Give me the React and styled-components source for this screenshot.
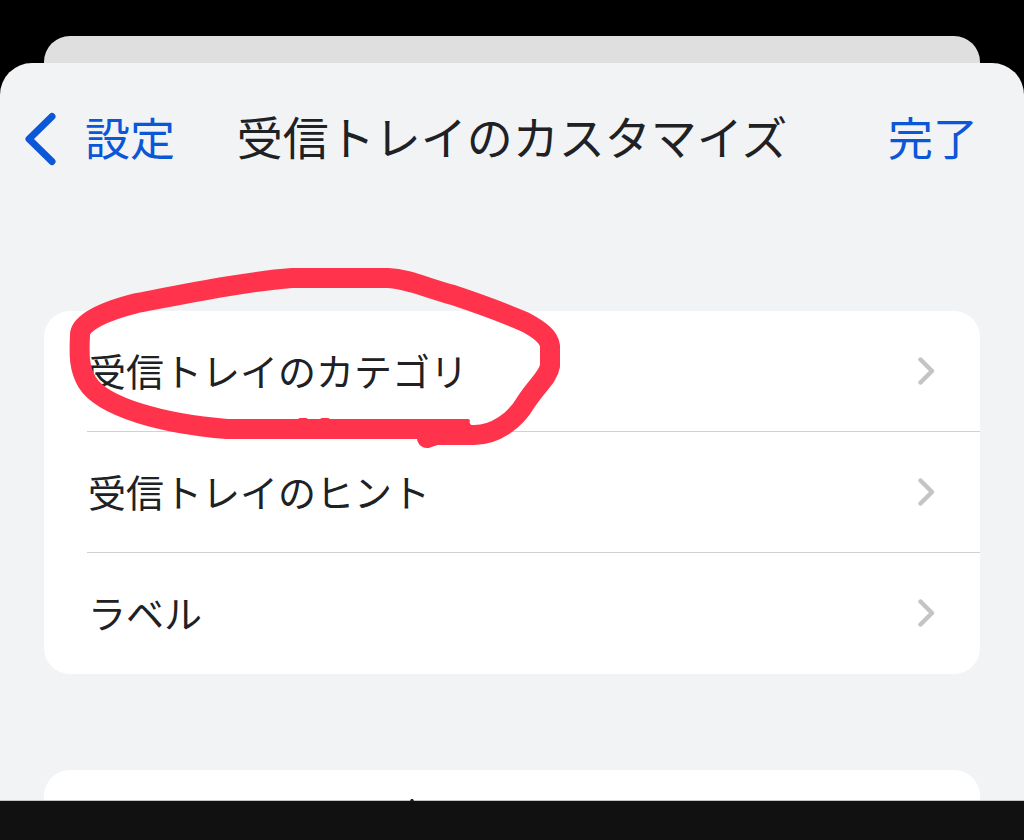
import styled, { createGlobalStyle } from "styled-components";

const rows = [
  { label: "受信トレイのカテゴリ", href: "#categories", marked: true },
  { label: "受信トレイのヒント", href: "#tips" },
  { label: "ラベル", href: "#labels" },
];

export default function App() {
  return (
    <Screen>
      <GlobalStyle />
      <BackCard />
      <Sheet>
        <Header>
          <BackButton type="button">
            <BackIcon viewBox="0 0 32 54" aria-hidden="true">
              <path d="M28 4.5 L5 27 L28 49.5" />
            </BackIcon>
            <HeaderLabel>設定</HeaderLabel>
          </BackButton>
          <Title>受信トレイのカスタマイズ</Title>
          <DoneButton type="button">
            <HeaderLabel>完了</HeaderLabel>
          </DoneButton>
        </Header>
        <Content>
          <Group>
            {rows.map((row) => (
              <Row key={row.label}>
                <RowLink href={row.href}>
                  <RowLabel>{row.label}</RowLabel>
                  <Chevron viewBox="0 0 18 30" aria-hidden="true">
                    <path d="M3.5 3.5 L15 15 L3.5 26.5" />
                  </Chevron>
                </RowLink>
                {row.marked && <Marker />}
              </Row>
            ))}
          </Group>
          <NextGroup>
            {/* tip of the text that is cut off by the bottom bar */}
            <Speck viewBox="0 0 4 2" aria-hidden="true">
              <path d="M0 2 L1 0 H3 L4 2 Z" />
            </Speck>
          </NextGroup>
        </Content>
      </Sheet>
      <BottomBar />
    </Screen>
  );
}

// hand drawn ring around the first row
function Marker() {
  return (
    <Ring viewBox="68 264 496 190" aria-hidden="true">
      <path d="M338 278 H292 C250 281 190 293 137 303 C105 311 80 322 80 335 C79 355 79 368 87 382 C103 408 165 424 227 429 H462" />
      <path d="M338 278 H388 C408 279 424 287 453 295 C480 304 502 312 525 322 C540 330 549 337 550 346 V366 C548 377 538 384 526 402 C515 421 495 435 474 435 H436 L427 438" />
      <path className="rough" d="M300 420 H306 M322 420 H328 M392 421 H400 M422 421 H468" />
      <path className="rough" d="M336 270 H340 M382 270 H384" />
    </Ring>
  );
}

const GlobalStyle = createGlobalStyle`
  * {
    box-sizing: border-box;
  }

  body {
    margin: 0;
    background: #000000;
    color: #202124;
    font-family: "Noto Sans CJK JP", sans-serif;
  }
`;

const Screen = styled.div`
  display: flex;
  flex-direction: column;
  min-height: 100vh;
  padding-top: 36px;
  background: #000000;
`;

const BackCard = styled.div`
  height: 27px;
  margin: 0 44px;
  border-radius: 26px 26px 0 0;
  background: #dfdfdf;
`;

const Sheet = styled.main`
  display: flex;
  flex-direction: column;
  flex: 1;
  border-radius: 32px 32px 0 0;
  background: #f1f3f5;
`;

const Header = styled.header`
  display: grid;
  grid-template-columns: 1fr auto 1fr;
  align-items: center;
  height: 152px;
  padding: 0 24px;
`;

const Title = styled.h1`
  margin: 0;
  padding-bottom: 8px;
  font-size: 46px;
  font-weight: 400;
  line-height: 64px;
`;

const HeaderButton = styled.button`
  display: flex;
  align-items: center;
  padding: 0;
  border: none;
  background: none;
  color: #0b57d8;
  font-family: inherit;
  font-size: 45px;
  line-height: 64px;
  white-space: nowrap;
  cursor: pointer;
`;

const HeaderLabel = styled.span`
  padding-bottom: 4px;
`;

const BackButton = styled(HeaderButton)`
  gap: 29px;
`;

const DoneButton = styled(HeaderButton)`
  justify-self: end;
  padding: 0 22px;
`;

const Icon = styled.svg`
  flex-shrink: 0;
  fill: none;
  stroke-linecap: round;
  stroke-linejoin: round;
`;

const BackIcon = styled(Icon)`
  width: 32px;
  height: 54px;
  stroke: #0b57d8;
  stroke-width: 7;
`;

const Chevron = styled(Icon)`
  width: 18px;
  height: 30px;
  stroke: #c4c4c6;
  stroke-width: 4.4;
`;

const Content = styled.div`
  display: flex;
  flex-direction: column;
  flex: 1;
  gap: 96px;
  padding: 96px 44px 0;
`;

const Group = styled.ul`
  margin: 0;
  padding: 0;
  list-style: none;
  border-radius: 26px;
  background: #ffffff;
`;

const Row = styled.li`
  position: relative;
  padding-left: 43px;
`;

const RowLink = styled.a`
  display: flex;
  align-items: center;
  justify-content: space-between;
  height: 121px;
  padding: 0 45px 0 1px;
  border-bottom: 1px solid #d0d1d3;
  color: inherit;
  font-size: 38px;
  line-height: 56px;
  text-decoration: none;

  ${Row}:last-child & {
    border-bottom-color: transparent;
  }
`;

const RowLabel = styled.span`
  padding-bottom: 2px;
`;

const Ring = styled.svg`
  position: absolute;
  top: -47px;
  left: 24px;
  z-index: 1;
  width: 496px;
  height: 190px;
  fill: none;
  stroke: #ff344c;
  stroke-width: 20;
  stroke-linecap: round;
  stroke-linejoin: round;
  pointer-events: none;

  .rough {
    stroke-width: 4;
  }
`;

const NextGroup = styled.div`
  position: relative;
  flex: 1;
  min-height: 30px;
  border-radius: 26px 26px 0 0;
  background: #ffffff;
`;

const Speck = styled.svg`
  position: absolute;
  bottom: -1px;
  left: 366px;
  width: 4px;
  height: 2px;
  fill: #202124;
`;

const BottomBar = styled.footer`
  height: 40px;
  border-top: 1px solid #c4c5c6;
  background: #111111;
`;
